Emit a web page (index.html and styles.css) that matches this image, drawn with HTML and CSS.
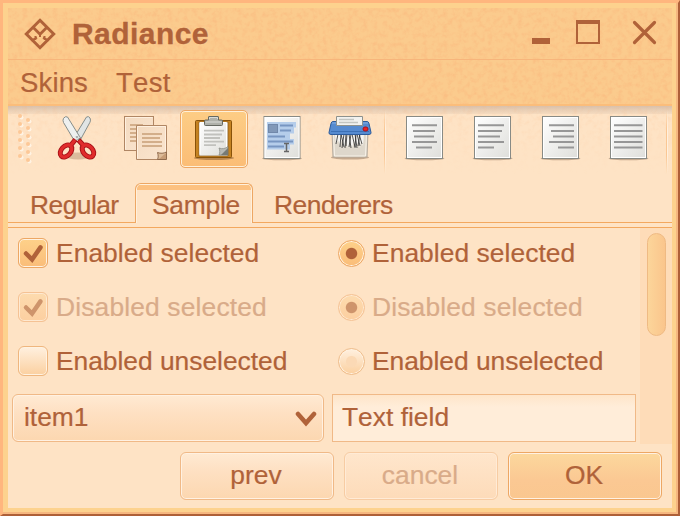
FILE: index.html
```html
<!DOCTYPE html>
<html lang="en">
<head>
<meta charset="utf-8">
<title>Radiance</title>
<link rel="stylesheet" href="styles.css">
</head>
<body>
<svg class="defs" width="0" height="0" aria-hidden="true">
  <defs>
    <filter id="grain" x="0" y="0" width="100%" height="100%" color-interpolation-filters="sRGB">
      <feTurbulence type="fractalNoise" baseFrequency="0.2" numOctaves="3" seed="4"/>
      <feColorMatrix values="0 0 0 0 0.98  0 0 0 0 0.68  0 0 0 0 0.46  2.4 0 0 0 -1"/>
    </filter>
    <linearGradient id="paper" x1="0" y1="0" x2="1" y2="1"><stop offset="0" stop-color="#fff"/><stop offset="1" stop-color="#dededa"/></linearGradient>
    <linearGradient id="tan" x1="0" y1="0" x2="1" y2="1"><stop offset="0" stop-color="#f3dac0"/><stop offset="1" stop-color="#fbe5cf"/></linearGradient>
    <g id="sheet">
      <ellipse cx="24.500" cy="44.500" rx="20" ry="1.800" fill="#5c402b" opacity=".35"/>
      <rect x="6.500" y="2.500" width="36" height="42" fill="url(#paper)" stroke="#888a85"/>
      <rect x="7.500" y="3.500" width="34" height="40" fill="none" stroke="#fff"/>
    </g>
  </defs>
</svg>
<div class="window">
  <header class="head">
    <svg class="grain"><rect width="100%" height="100%" filter="url(#grain)"/></svg>
    <div class="titlebar">
      <svg class="logo" width="32" height="32" viewBox="24 18 32 32" fill="none" stroke="#b06239"><path d="M40 20.300 53.700 34 40 47.700 26.300 34Z" stroke-width="3"/><path d="M33.300 27.500 40 34.200 46.700 27.500" stroke-width="2.800"/><path d="M31.500 40.500 37 37.600M48.500 40.500 43 37.600M35.500 36v4M44.500 36v4M40 34v3" stroke-width="2"/></svg>
      <h1>Radiance</h1>
      <svg class="controls" width="128" height="28" viewBox="530 20 128 28" fill="none" stroke="#b06239"><path d="M532 41h18" stroke-width="6"/><path d="M577 22v21h22V22" stroke-width="2"/><path d="M576 22h24" stroke-width="4"/><path d="m634.500 22.500 20 20m0-20-20 20" stroke-width="3.200" stroke-linecap="round"/></svg>
    </div>
    <nav class="menubar"><span class="skins">Skins</span><span class="test">Test</span></nav>
  </header>
  <div class="toolbar">
    <svg class="grain soft"><rect width="100%" height="100%" filter="url(#grain)"/></svg>
    <svg class="grip" width="19" height="52" viewBox="16 112 19 52"><g fill="#fff3e3"><circle cx="21.500" cy="117.500" r="2"/><circle cx="21.500" cy="125.500" r="2"/><circle cx="21.500" cy="133.500" r="2"/><circle cx="21.500" cy="141.500" r="2"/><circle cx="21.500" cy="149.500" r="2"/><circle cx="21.500" cy="157.500" r="2"/><circle cx="29.500" cy="121.500" r="2"/><circle cx="29.500" cy="129.500" r="2"/><circle cx="29.500" cy="137.500" r="2"/><circle cx="29.500" cy="145.500" r="2"/><circle cx="29.500" cy="153.500" r="2"/><circle cx="29.500" cy="161.500" r="2"/></g><g fill="#fdc897"><circle cx="20" cy="116" r="2"/><circle cx="20" cy="124" r="2"/><circle cx="20" cy="132" r="2"/><circle cx="20" cy="140" r="2"/><circle cx="20" cy="148" r="2"/><circle cx="20" cy="156" r="2"/><circle cx="28" cy="120" r="2"/><circle cx="28" cy="128" r="2"/><circle cx="28" cy="136" r="2"/><circle cx="28" cy="144" r="2"/><circle cx="28" cy="152" r="2"/><circle cx="28" cy="160" r="2"/></g></svg>
    <div class="tool">
      <svg width="48" height="48" viewBox="54 114 48 48">
        <ellipse cx="78" cy="156" rx="12" ry="3.500" fill="#9b7454" opacity=".35"/>
        <path d="M86.500 117q2-1.200 3.500 1 1 2.200 0 4.200L80 140.500l-6-3Z" fill="#e1e5e5" stroke="#858d8a"/>
        <path d="M67.500 117q-2-1.200-4 1.300-1 2 0 4.200l11 18.500 6-3Z" fill="#eef0ef" stroke="#858d8a"/>
        <g fill="none" stroke="#a51016" stroke-width="5"><ellipse cx="66" cy="151" rx="4.700" ry="6.900" transform="rotate(42 66 151)"/><ellipse cx="88" cy="151" rx="4.700" ry="6.900" transform="rotate(-42 88 151)"/><path d="m71 145 4.500-5.500M83 145l-4.500-5"/></g>
        <g fill="none" stroke="#e02c2c" stroke-width="3.200"><ellipse cx="66" cy="151" rx="4.700" ry="6.900" transform="rotate(42 66 151)"/><ellipse cx="88" cy="151" rx="4.700" ry="6.900" transform="rotate(-42 88 151)"/><path d="m71 145 4-5M83 145l-4-4.500"/></g>
        <path d="m74.500 136 2.500 4.500 2.500-4.500Z" fill="#dde0df"/><circle cx="77" cy="137" r="1" fill="#9da4a1"/>
      </svg>
    </div>
    <div class="tool">
      <svg width="48" height="48" viewBox="122 114 48 48">
        <rect x="124.500" y="116.500" width="29" height="34" fill="url(#tan)" stroke="#b08664"/><path d="M125.500 149.500v-32h27" fill="none" stroke="#fff0df"/>
        <path d="M130 125h13M130 129h7M130 133h7M130 137h7M130 141h7" stroke="#d3ae8a" stroke-width="2"/>
        <path d="M136.500 125.500h30v27l-8 7h-22Z" fill="url(#tan)" stroke="#b08664"/><path d="M137.500 158.500v-32h28v25" fill="none" stroke="#fff0df"/>
        <path d="M142 134h20M142 138h18M142 142h20M142 146h20" stroke="#d3ae8a" stroke-width="2"/>
        <path d="M157.500 159.500c1-2 .8-4.500 0-7 3.200 1.200 6 1 9-.5v7.500Z" fill="#ddbb98" stroke="#916b4d"/><path d="m159 159 7-6v6Z" fill="#c79c76"/>
      </svg>
    </div>
    <div class="tool selected">
      <svg width="48" height="48" viewBox="190 114 48 48">
        <ellipse cx="214" cy="158" rx="20" ry="2" fill="#6b421e" opacity=".45"/>
        <rect x="195.500" y="120.500" width="36" height="37" rx="1" fill="#c58322" stroke="#885209"/>
        <path d="M199 122h29v34h-29Z" fill="url(#paper)" stroke="#8b5a17" stroke-width=".7"/><path d="M200 154.500v-32h26.500v25" fill="none" stroke="#fff"/>
        <path d="M204 130.700h20M204 134.500h18M204 138h16M204 141.700h20M204 145.200h12" stroke="#c1c1bd" stroke-width="1.800"/>
        <path d="M219 155c1-2 1-4.500 0-7 3.500 1.300 6 .8 9-1.500v8.500Z" fill="#b9bab5" stroke="#858780" stroke-width=".7"/><path d="m221 155 7-7v7Z" fill="#777a74"/>
        <path d="M208.500 120v-3q0-.5.500-.5h9q.5 0 .5.500v3h3q1 0 1 1v3.500q0 1-1 1h-16q-1 0-1-1V121q0-1 1-1Z" fill="#afb1aa" stroke="#666961"/><path d="M209.500 119v-1.500h8v1.500M205.500 122h16" stroke="#dadbd7" fill="none"/>
      </svg>
    </div>
    <div class="tool">
      <svg width="48" height="48" viewBox="258 114 48 48">
        <g transform="translate(257.500 114)"><use href="#sheet"/></g>
        <path d="M267 122h29v5.500h-2v6h-4v5.500h4v5.500h-4v5h-23Z" fill="#b5cdea"/><rect x="268.500" y="124.500" width="9" height="8" fill="#8198b8" stroke="#7188aa"/>
        <path d="M280 125.500h13M280 130.500h11M268 136.500h17M268 141.500h25M268 146.500h16" stroke="#7896c1" stroke-width="2"/>
        <path d="M284 143.500h5M284 151.500h5M286.500 143.500v8" stroke="#666" stroke-width="1.500"/>
      </svg>
    </div>
    <div class="tool">
      <svg width="48" height="48" viewBox="326 114 48 48">
        <ellipse cx="350" cy="157.500" rx="19" ry="2" fill="#5c402b" opacity=".35"/>
        <path d="M332 132h36l-1 25h-34Z" fill="#ded7cb" stroke="#b3a89b"/><path d="M333.500 134l1 22h31l1-22" fill="none" stroke="#f8f2e8"/>
        <path d="M335 134h29l-1 12-2-5-1 7-2-6-2 7-2-8-2 7-2-7-2 7-2-7-2 7-2-8-2 5-2-5-2 4Z" fill="#f6f5f2"/>
        <path d="m338 134-2 10m5-10-1 13m4-13-2 14m5-14-1 12m3-12 2 14m1-14 3 13m0-13 2 14m0-14 3 12m-1-12 3 10M341 134l3 13m2-13-1 14m6-14-2 13m7-13-1 14m5-14-2 12" stroke="#292929" stroke-width=".8" fill="none"/>
        <path d="M333 121.500h34q1.500 0 2 2l2 9q.3 2-2 2h-38q-2.300 0-2-2l2-9q.5-2 2-2Z" fill="#568bd0" stroke="#2e5c9c"/><path d="M331 131.500h38" stroke="#3c70b5"/><path d="M332 123h36" stroke="#85aee3"/>
        <path d="M336.500 125.500v-9h26v9Z" fill="#f2f2ef" stroke="#8d918d"/><path d="M339 119.500h15M339 122.500h19" stroke="#c3c5c1" stroke-width="1.500"/>
        <rect x="363" y="127" width="5" height="4" rx="2" fill="#f02020" stroke="#a5121f"/>
      </svg>
    </div>
    <i class="separator"></i>
    <div class="tool"><svg width="48" height="48" viewBox="0 0 48 48"><use href="#sheet"/><path class="lines" d="M12 11.300h25M13 16.900h22M14 22.500h20M12 28.100h25M16 33.600h16"/></svg></div>
    <div class="tool"><svg width="48" height="48" viewBox="0 0 48 48"><use href="#sheet"/><path class="lines" d="M10 11.300h26M10 16.900h24M10 22.500h22M10 28.100h26M10 33.600h16"/></svg></div>
    <div class="tool"><svg width="48" height="48" viewBox="0 0 48 48"><use href="#sheet"/><path class="lines" d="M13 11.300h25M15 16.900h23M17 22.500h21M13 28.100h25M22 33.600h16"/></svg></div>
    <div class="tool"><svg width="48" height="48" viewBox="0 0 48 48"><use href="#sheet"/><path class="lines" d="M10 11.300h28.500M10 16.900h28.500M10 22.500h28.500M10 28.100h28.500M10 33.600h28.500"/></svg></div>
    <i class="separator last"></i>
  </div>
  <div class="tabs">
    <div class="tab regular">Regular</div><div class="tab active">Sample</div><div class="tab renderers">Renderers</div>
  </div>
  <main class="pane">
    <div class="form">
      <label class="option"><span class="check on"><svg viewBox="0 0 30 30"><path d="m7.500 15.500 6.500 6.500 9-13"/></svg></span>Enabled selected</label>
      <label class="option"><span class="radio on"></span>Enabled selected</label>
      <label class="option disabled"><span class="check on"><svg viewBox="0 0 30 30"><path d="m7.500 15.500 6.500 6.500 9-13"/></svg></span>Disabled selected</label>
      <label class="option disabled"><span class="radio on"></span>Disabled selected</label>
      <label class="option unselected"><span class="check"></span>Enabled unselected</label>
      <label class="option unselected"><span class="radio"></span>Enabled unselected</label>
      <div class="combo"><span>item1</span><svg width="22" height="16" viewBox="0 0 22 16"><path d="m3 3 8 9 8-9" fill="none" stroke="#b06239" stroke-width="4.500" stroke-linecap="round"/></svg></div>
      <div class="field">Text field</div>
    </div>
    <div class="scroll"><div class="thumb"></div></div>
  </main>
  <footer class="actions">
    <div class="button">prev</div><div class="button off">cancel</div><div class="button primary">OK</div>
  </footer>
</div>
</body>
</html>
```
FILE: styles.css
```css
* { box-sizing: border-box; }
body { margin: 0; }
.defs { position: absolute; }
.window {
  width: 680px; height: 516px;
  border: 8px solid #fdd28e;
  background: #fee3c5; color: #b06239;
  font: 26.400px/30px "Liberation Sans", Arial, sans-serif;
  font-kerning: none;
  -webkit-text-stroke: .2px;
  position: relative;
}
.window::before {
  content: ""; position: absolute; inset: -8px; pointer-events: none;
  border: 3px solid #ffb67e;
  border-right: 2px solid #ae6038; border-bottom: 2px solid #ae6038;
  box-shadow: inset -2px -2px #f6b780;
}
.head { position: relative; background: #fbcb8d; height: 98px; }
.grain { position: absolute; inset: 0; width: 100%; height: 100%; opacity: .36; }
.grain.soft { opacity: .15; -webkit-mask-image: linear-gradient(#000, transparent); mask-image: linear-gradient(#000, transparent); }
.titlebar { position: relative; height: 52px; border-bottom: 1px solid #f7b57b; display: flex; align-items: center; padding-left: 16px; }
h1 { font-size: 30px; line-height: 34px; margin: 0 0 0 16px; letter-spacing: .45px; -webkit-text-stroke: .3px; }
.logo, .controls { flex: none; }
.controls { margin: 0 14px 0 auto; }
.menubar { position: relative; height: 46px; border-bottom: 2px solid #fbbd7b; padding: 8px 12px; display: flex; font-size: 27.500px; letter-spacing: .15px; }
.test { margin-left: 28px; letter-spacing: .3px; }
.toolbar { position: relative; height: 70px; display: flex; padding: 4px 0 0 8px; }
.toolbar::before { content: ""; position: absolute; left: 0; right: 0; top: 0; height: 8px; background: linear-gradient(#d9c1ac, #ead0b6 55%, #f5dbbf); }
.grip { position: relative; margin: 2px 9px 0 0; flex: none; }
.tool { position: relative; width: 68px; height: 58px; flex: none; display: flex; align-items: flex-start; justify-content: center; padding-top: 4px; }
.tool.selected { padding-top: 3px; border: 1px solid #eda764; border-radius: 5px; background: linear-gradient(#fdcd85, #fbbd76); box-shadow: inset 0 0 0 1px #fff0d9; }
.tool svg { display: block; flex: none; }
.lines { stroke: #979797; stroke-width: 2; fill: none; }
.separator { position: relative; width: 6px; height: 64px; flex: none; background: linear-gradient(#fac79300, #fac793 30%, #fac793 70%, #fac79300) 0 0 / 1px 100% no-repeat, linear-gradient(#fff0df00, #fff0df 30%, #fff0df 70%, #fff0df00) 1px 0 / 1px 100% no-repeat; }
.separator.last { margin-left: 4px; }
.tabs { height: 52px; display: flex; padding-top: 7px; background: linear-gradient(#f3a85f, #f3a85f) 0 46px / 100% 1px no-repeat, linear-gradient(#f3a85f, #f3a85f) 0 51px / 100% 1px no-repeat; }
.tab { height: 40px; padding-top: 7px; flex: none; }
.regular { width: 127px; padding-left: 22px; letter-spacing: -.55px; }
.active { width: 118px; padding-left: 16px; letter-spacing: -.25px; border: 1px solid #eda764; border-bottom: 0; border-radius: 6px 6px 0 0; background: linear-gradient(#fff0dc 1px, #fcc181 1px, #fcc181 6px, #fee3c5 6px); padding-top: 6px; box-shadow: inset 1px 0 #fff0dc, inset -1px 0 #fff0dc; }
.renderers { padding-left: 21px; letter-spacing: -.5px; }
.pane { display: flex; height: 216px; }
.form { width: 632px; display: grid; grid-template-columns: 320px 304px; grid-template-rows: 54px 54px 58px 48px; padding-left: 4px; }
.option { display: flex; align-items: flex-start; padding: 10px 0 0 6px; letter-spacing: .05px; white-space: nowrap; }
.disabled { color: #d9ab89; letter-spacing: .15px; }
.unselected { letter-spacing: -.03px; }
.check { width: 30px; height: 30px; border: 1px solid #efb67e; border-radius: 6px; margin-right: 8px; background: linear-gradient(#fff0df, #fbd0a0); box-shadow: inset 0 0 0 1px #fff2e1; flex: none; }
.check svg { display: block; width: 28px; height: 28px; }
.check path { fill: none; stroke: #b06239; stroke-width: 4.800; stroke-linecap: round; stroke-linejoin: miter; }
.check.on { border-color: #eda764; background: linear-gradient(#fed18a, #fabd79); }
.radio { width: 27px; height: 27px; border: 1px solid #efbd8c; border-radius: 50%; margin: 2px 7px 0 0; background: radial-gradient(circle, #fbd9b5 5px, transparent 6px), linear-gradient(#fff0df, #fbd0a0); box-shadow: inset 0 0 0 1px #fff2e1; flex: none; }
.radio.on { border-color: #eda764; background: radial-gradient(circle, #b06239 5.200px, transparent 6.200px), linear-gradient(#fed18a, #fabd79); }
.disabled .check.on { background: linear-gradient(#fddbae, #fccfa0); border-color: #f5c294; box-shadow: inset 0 0 0 1px #fee9d1; }
.disabled .check path { stroke: #ce946b; }
.disabled .radio.on { background: radial-gradient(circle, #ce946b 5.200px, transparent 6.200px), linear-gradient(#fddbae, #fccfa0); border-color: #f5c294; box-shadow: inset 0 0 0 1px #fee9d1; }
.combo, .button { border: 1px solid #f0b987; border-radius: 6px; background: linear-gradient(#ffead3, #fee0c2 40%, #fcd7b0); box-shadow: inset 0 0 0 1px #fff1e2; }
.combo { width: 312px; height: 48px; display: flex; justify-content: space-between; padding: 7px 6px 0 11px; }
.combo svg { margin-top: 9px; }
.field { height: 48px; border: 1px solid #f0b987; background: linear-gradient(#fee5c9, #ffedd9 12px); padding: 7px 9px; }
.scroll { width: 32px; height: 216px; background: #fedcb8; padding: 5px 6px 0 7px; }
.thumb { width: 19px; height: 103px; border: 1px solid #efba83; border-radius: 10px; background: linear-gradient(90deg, #fcd59a, #fac58c); }
.actions { height: 64px; display: flex; justify-content: flex-end; gap: 10px; padding: 8px 10px 0 0; }
.button { width: 154px; height: 48px; text-align: center; padding: 7px 2px 0 0; }
.off { color: #d9ab89; border-color: #f7cca3; background: linear-gradient(#ffe6cc, #fddbb9); box-shadow: inset 0 0 0 1px #ffebd6; }
.primary { border-color: #eda764; background: linear-gradient(#fcd89d, #fbc893 60%, #fac78f); }
```
